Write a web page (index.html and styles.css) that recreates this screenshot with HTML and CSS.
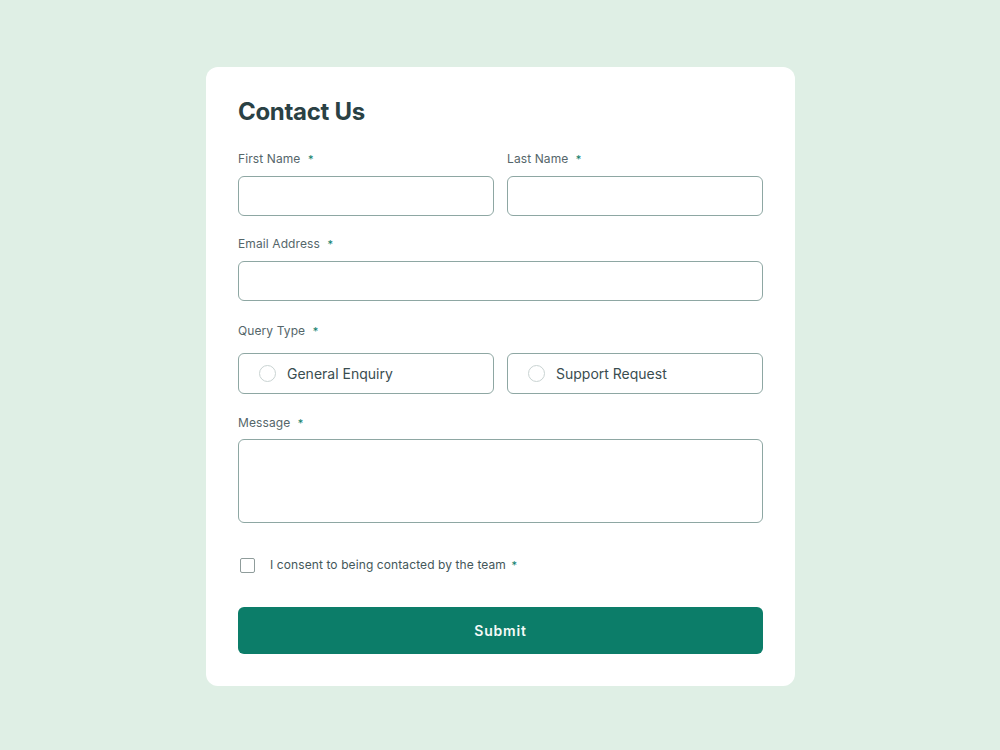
FILE: index.html
```html
<!DOCTYPE html>
<html lang="en">
<head>
<meta charset="utf-8">
<title>Contact Us</title>
<link rel="stylesheet" href="styles.css">
</head>
<body>
  <main class="card">
    <h1 class="title">Contact Us</h1>

    <div class="row">
      <div class="field">
        <label class="label">First Name <span class="req">*</span></label>
        <div class="input"></div>
      </div>
      <div class="field">
        <label class="label">Last Name <span class="req">*</span></label>
        <div class="input"></div>
      </div>
    </div>

    <div class="field field-email">
      <label class="label">Email Address <span class="req">*</span></label>
      <div class="input"></div>
    </div>

    <div class="field field-query">
      <label class="label label-query">Query Type <span class="req">*</span></label>
      <div class="row">
        <div class="option"><span class="radio"></span>General Enquiry</div>
        <div class="option"><span class="radio"></span>Support Request</div>
      </div>
    </div>

    <div class="field field-message">
      <label class="label label-message">Message <span class="req">*</span></label>
      <div class="textarea"></div>
    </div>

    <div class="consent">
      <span class="checkbox"></span>
      <span>I consent to being contacted by the team <span class="req">*</span></span>
    </div>

    <button class="submit" type="button">Submit</button>
  </main>
</body>
</html>
```

FILE: styles.css
```css
* {
  box-sizing: border-box;
}

body {
  margin: 0;
  padding: 67px 0 0 1px;
  min-height: 750px;
  background: #dfefe5;
  font-family: Inter, "Noto Sans", sans-serif;
  color: #2a4144;
}

.card {
  width: 589px;
  margin: 0 auto;
  background: #ffffff;
  border-radius: 12px;
  padding: 30px 32px 32px;
  display: flex;
  flex-direction: column;
}

.title {
  margin: 0 0 24px;
  font-size: 24px;
  line-height: 30px;
  font-weight: 650;
  letter-spacing: -0.3px;
  color: #2a4144;
}

.row {
  display: flex;
  gap: 13px;
}

.row > * {
  flex: 1;
}

.field {
  display: flex;
  flex-direction: column;
}

.label {
  font-size: 12px;
  line-height: 16px;
  letter-spacing: 0.1px;
  color: #55666a;
  margin-bottom: 9px;
}

.req {
  color: #0c7d69;
  margin-left: 4px;
  font-size: 11px;
}

.input {
  height: 40px;
  border: 1px solid #8ea7a3;
  border-radius: 6px;
}

.field-email {
  margin-top: 20px;
}

.field-query {
  margin-top: 22px;
}

.label-query {
  margin-bottom: 14px;
}

.option {
  height: 41px;
  border: 1px solid #8ea7a3;
  border-radius: 6px;
  display: flex;
  align-items: center;
  padding-left: 20px;
  gap: 11px;
  font-size: 14px;
  color: #3a4d50;
}

.radio {
  width: 17px;
  height: 17px;
  border: 1.5px solid #c9d3d2;
  border-radius: 50%;
  flex: none;
}

.field-message {
  margin-top: 21px;
}

.label-message {
  margin-bottom: 8px;
}

.textarea {
  height: 84px;
  border: 1px solid #8ea7a3;
  border-radius: 6px;
}

.consent {
  margin-top: 34px;
  display: flex;
  align-items: center;
  gap: 15px;
  padding-left: 2px;
  font-size: 12px;
  line-height: 16px;
  letter-spacing: 0.1px;
  color: #44575a;
}

.checkbox {
  width: 15px;
  height: 15px;
  border: 1.5px solid #8f9c9b;
  border-radius: 2px;
  flex: none;
}

.consent .req {
  margin-left: 2px;
}

.submit {
  margin-top: 34px;
  height: 47px;
  border: none;
  border-radius: 6px;
  background: #0c7d69;
  color: #f4faf7;
  font-family: inherit;
  font-size: 14px;
  font-weight: 600;
  letter-spacing: 0.8px;
}
```
